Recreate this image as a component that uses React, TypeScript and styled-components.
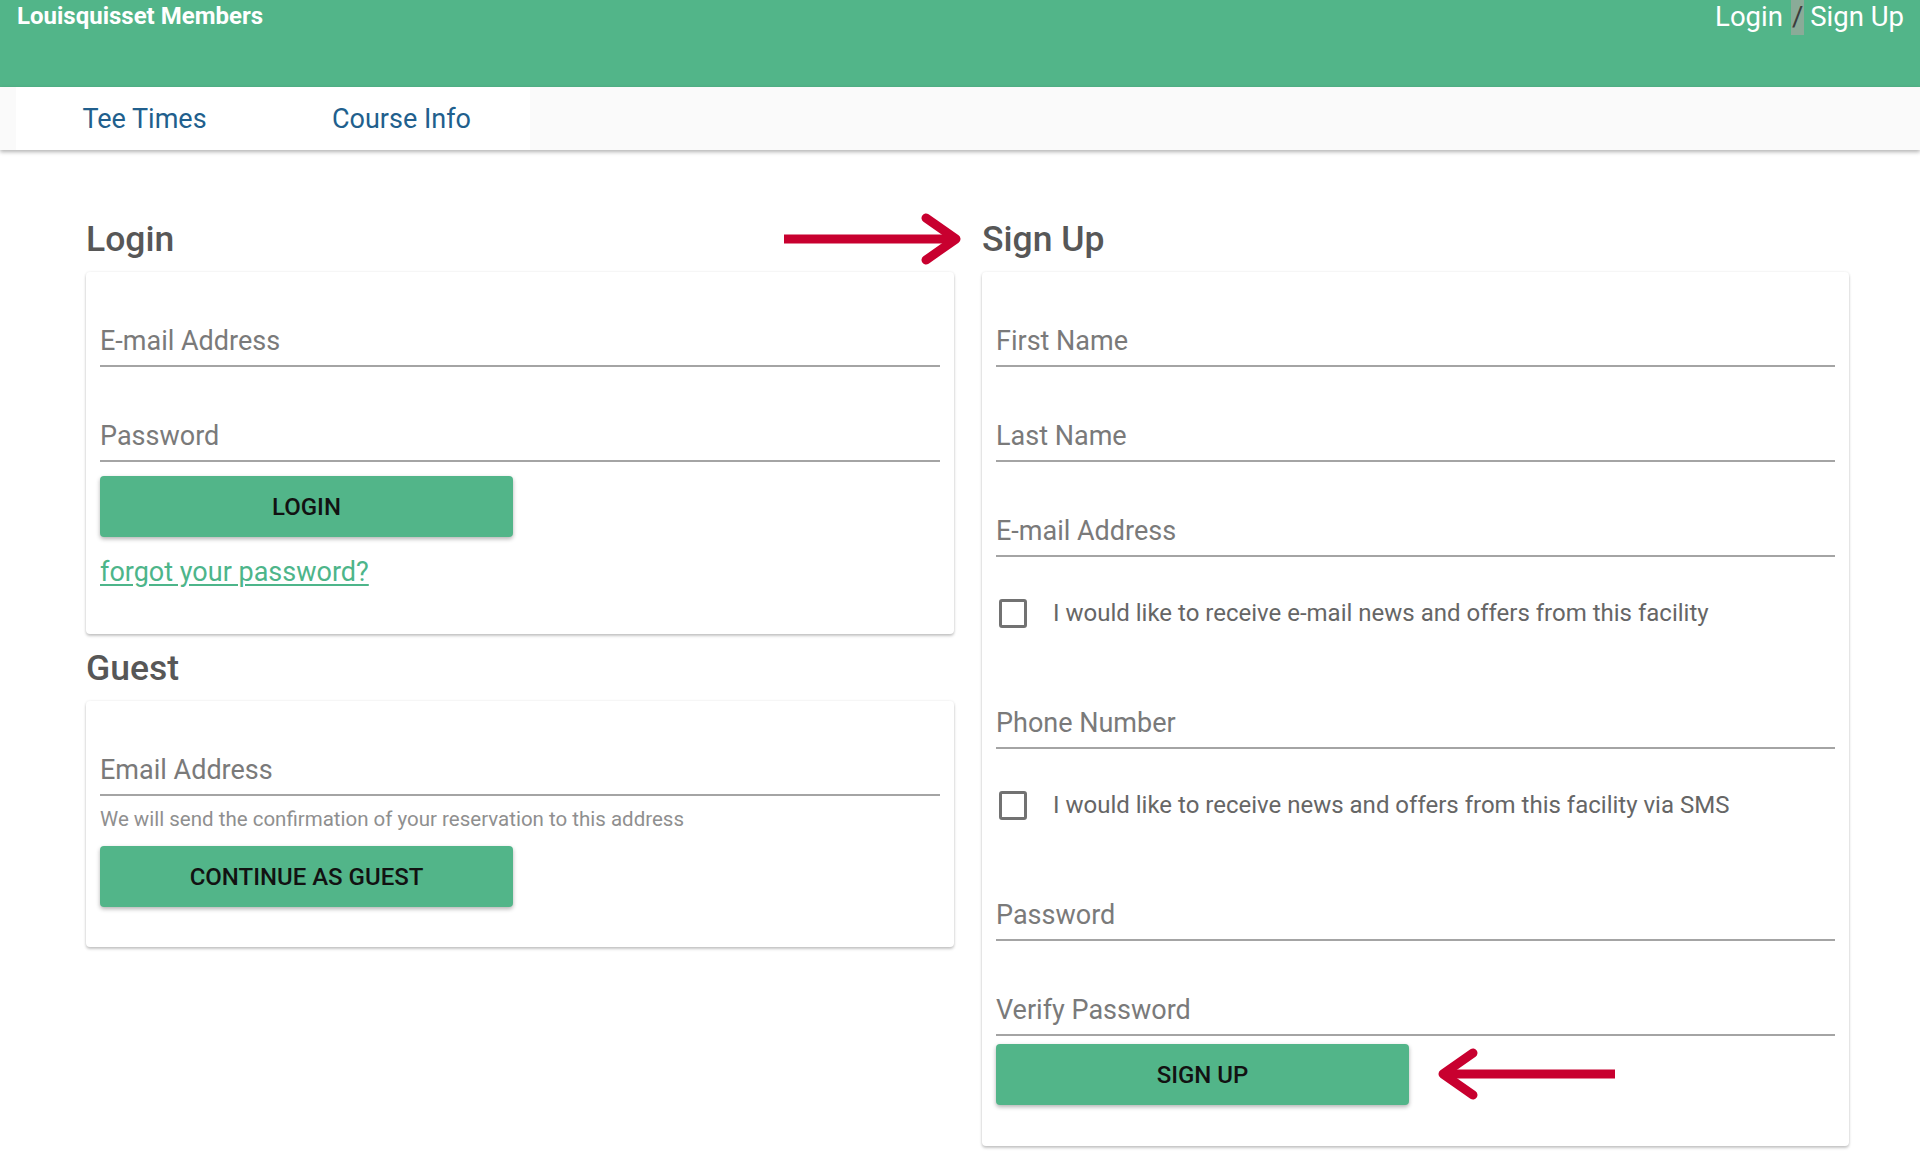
import React from 'react';
import styled, { createGlobalStyle } from 'styled-components';

const GREEN = '#52b589';

const GlobalStyle = createGlobalStyle`
  body {
    margin: 0;
    background: #ffffff;
    font-family: Roboto, "Liberation Sans", Arial, sans-serif;
  }
  * {
    box-sizing: border-box;
  }
`;

const Page = styled.div`
  position: relative;
  width: 1920px;
  min-height: 1174px;
`;

const Header = styled.header`
  height: 87px;
  background: ${GREEN};
  display: flex;
  justify-content: space-between;
  align-items: flex-start;
  padding: 0 16px 0 17px;
`;

const Brand = styled.div`
  color: #ffffff;
  font-size: 24px;
  font-weight: 700;
  line-height: 28px;
  padding-top: 2px;
`;

const AuthLinks = styled.div`
  color: #ffffff;
  font-size: 27.5px;
  line-height: 30px;
  padding-top: 2px;
  display: flex;
  align-items: flex-start;
`;

const Slash = styled.span`
  display: inline-block;
  background: #8aab98;
  color: #3c3c3c;
  margin: -2px 6px 0 8px;
  padding: 2px 1px 3px;
`;

const Nav = styled.nav`
  height: 63px;
  background: #fafafa;
  box-shadow: 0 2px 4px rgba(0, 0, 0, 0.3);
  padding-left: 16px;
  position: relative;
  z-index: 1;
`;

const Tabs = styled.div`
  display: flex;
  width: 514px;
  height: 100%;
  background: #ffffff;
`;

const Tab = styled.a`
  width: 257px;
  display: flex;
  align-items: center;
  justify-content: center;
  color: #215f8d;
  font-size: 27px;
  text-decoration: none;
  cursor: pointer;
`;

const Main = styled.main`
  display: grid;
  grid-template-columns: 868px 867px;
  column-gap: 28px;
  padding: 69px 0 40px 86px;
  align-items: start;
`;

const Column = styled.section`
  display: flex;
  flex-direction: column;
`;

const Heading = styled.h2<{ $top?: number }>`
  margin: ${(p) => p.$top ?? 0}px 0 13px;
  font-size: 35.5px;
  line-height: 40px;
  font-weight: 500;
  color: #575757;
`;

const Card = styled.div<{ $bottom: number }>`
  background: #ffffff;
  border-radius: 4px;
  box-shadow: 0 2px 3px rgba(0, 0, 0, 0.22), 0 0 3px rgba(0, 0, 0, 0.08);
  padding: 0 14px ${(p) => p.$bottom}px;
  display: flex;
  flex-direction: column;
  align-items: flex-start;
`;

const Field = styled.label`
  width: 100%;
  height: 95px;
  display: flex;
  align-items: flex-end;
  padding-bottom: 9px;
  border-bottom: 2px solid #a4a4a4;
`;

const Input = styled.input`
  width: 100%;
  height: 30px;
  border: none;
  outline: none;
  padding: 0;
  background: transparent;
  font-family: inherit;
  font-size: 27px;
  line-height: 30px;
  color: #333333;

  &::placeholder {
    color: #7a7a7a;
  }
`;

const CheckRow = styled.label<{ $top: number; $height: number }>`
  width: 100%;
  height: ${(p) => p.$height}px;
  padding-top: ${(p) => p.$top}px;
  display: flex;
  align-items: center;
  gap: 26px;
  font-size: 24px;
  color: #666666;
  cursor: pointer;
`;

const Box = styled.input`
  appearance: none;
  margin: 0 0 0 3px;
  width: 28px;
  height: 29px;
  border: 3px solid #727272;
  border-radius: 3px;
  flex-shrink: 0;
`;

const Button = styled.button<{ $top: number }>`
  margin-top: ${(p) => p.$top}px;
  width: 413px;
  height: 61px;
  border: none;
  border-radius: 4px;
  background: ${GREEN};
  box-shadow: 0 2px 4px rgba(0, 0, 0, 0.3);
  font-family: inherit;
  font-size: 24px;
  font-weight: 500;
  color: #121212;
  text-transform: uppercase;
  cursor: pointer;
`;

const ForgotLink = styled.a`
  margin-top: 19px;
  font-size: 27px;
  line-height: 32px;
  color: #4db58a;
  text-decoration: underline;
  text-underline-offset: 3px;
  cursor: pointer;
`;

const Helper = styled.div`
  margin-top: 11px;
  font-size: 20.5px;
  line-height: 24px;
  color: #8f8f8f;
`;

const Annotation = styled.svg<{ $x: number; $y: number }>`
  position: absolute;
  left: ${(p) => p.$x}px;
  top: ${(p) => p.$y}px;
  overflow: visible;
`;

const RED = '#c8002f';

const ArrowRight = () => (
  <Annotation $x={784} $y={214} width={178} height={50} viewBox="0 0 178 50">
    <line x1={0} y1={25} x2={170} y2={25} stroke={RED} strokeWidth={9} />
    <polyline
      points="142,4 172,25 142,46"
      fill="none"
      stroke={RED}
      strokeWidth={9}
      strokeLinecap="round"
      strokeLinejoin="round"
    />
  </Annotation>
);

const ArrowLeft = () => (
  <Annotation $x={1437} $y={1049} width={178} height={50} viewBox="0 0 178 50">
    <line x1={8} y1={25} x2={178} y2={25} stroke={RED} strokeWidth={9} />
    <polyline
      points="36,4 6,25 36,46"
      fill="none"
      stroke={RED}
      strokeWidth={9}
      strokeLinecap="round"
      strokeLinejoin="round"
    />
  </Annotation>
);

const TextField = ({ label, type = 'text' }: { label: string; type?: string }) => (
  <Field>
    <Input type={type} placeholder={label} />
  </Field>
);

export default function App() {
  return (
    <Page>
      <GlobalStyle />
      <Header>
        <Brand>Louisquisset Members</Brand>
        <AuthLinks>
          <span>Login</span>
          <Slash>/</Slash>
          <span>Sign Up</span>
        </AuthLinks>
      </Header>

      <Nav>
        <Tabs>
          <Tab>Tee Times</Tab>
          <Tab>Course Info</Tab>
        </Tabs>
      </Nav>

      <Main>
        <Column>
          <Heading>Login</Heading>
          <Card $bottom={46}>
            <TextField label="E-mail Address" type="email" />
            <TextField label="Password" type="password" />
            <Button $top={14}>Login</Button>
            <ForgotLink>forgot your password?</ForgotLink>
          </Card>

          <Heading $top={14}>Guest</Heading>
          <Card $bottom={40}>
            <TextField label="Email Address" type="email" />
            <Helper>We will send the confirmation of your reservation to this address</Helper>
            <Button $top={15}>Continue as Guest</Button>
          </Card>
        </Column>

        <Column>
          <Heading>Sign Up</Heading>
          <Card $bottom={41}>
            <TextField label="First Name" />
            <TextField label="Last Name" />
            <TextField label="E-mail Address" type="email" />
            <CheckRow $top={15} $height={97}>
              <Box type="checkbox" />
              I would like to receive e-mail news and offers from this facility
            </CheckRow>
            <TextField label="Phone Number" type="tel" />
            <CheckRow $top={15} $height={97}>
              <Box type="checkbox" />
              I would like to receive news and offers from this facility via SMS
            </CheckRow>
            <TextField label="Password" type="password" />
            <TextField label="Verify Password" type="password" />
            <Button $top={8}>Sign Up</Button>
          </Card>
        </Column>
      </Main>

      <ArrowRight />
      <ArrowLeft />
    </Page>
  );
}
